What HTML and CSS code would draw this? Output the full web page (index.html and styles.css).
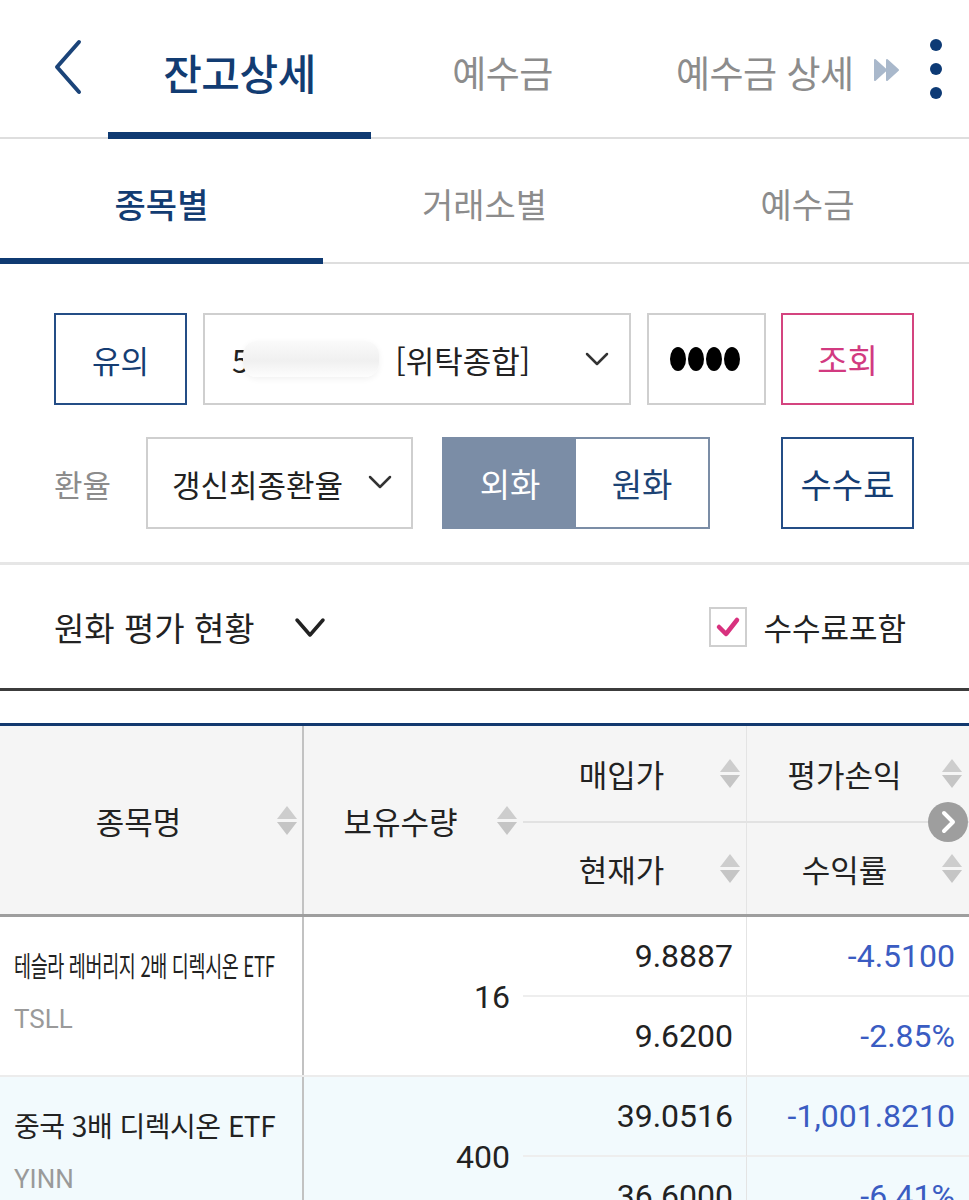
FILE: index.html
```html
<!DOCTYPE html>
<html lang="ko">
<head>
<meta charset="utf-8">
<title>잔고상세</title>
<link rel="stylesheet" href="styles.css">
</head>
<body>
<div class="app">
  <header class="topnav">
    <div class="back">
      <svg width="32" height="56" viewBox="0 0 32 56"><polyline points="27,3 5,28 27,53" fill="none" stroke="#1b4479" stroke-width="4" stroke-linecap="round" stroke-linejoin="round"/></svg>
    </div>
    <div class="ttab active">잔고상세</div>
    <div class="ttab">예수금</div>
    <div class="ttab ttab-last">예수금 상세</div>
    <span class="more">
      <svg width="26" height="24" viewBox="0 0 26 24"><path d="M1 2 L12 12 L1 22 Z" fill="#a9b8cb" stroke="#a9b8cb" stroke-width="2" stroke-linejoin="round"/><path d="M13 2 L24 12 L13 22 Z" fill="#a9b8cb" stroke="#a9b8cb" stroke-width="2" stroke-linejoin="round"/></svg>
    </span>
    <span class="kebab"><i></i><i></i><i></i></span>
  </header>

  <nav class="subtabs">
    <div class="stab active">종목별</div>
    <div class="stab">거래소별</div>
    <div class="stab">예수금</div>
  </nav>

  <section class="filters">
    <div class="frow">
      <div class="box btn-navy w133 b31">유의</div>
      <div class="box select acct">
        <span class="acct-num">5<span class="redact"></span></span>
        <span class="acct-type">[위탁종합]</span>
        <svg class="chev" width="24" height="14" viewBox="0 0 24 14"><polyline points="2,2 12,12 22,2" fill="none" stroke="#333" stroke-width="2.5" stroke-linecap="round" stroke-linejoin="round"/></svg>
      </div>
      <div class="box pw"><i></i><i></i><i></i><i></i></div>
      <div class="box btn-pink w133">조회</div>
    </div>
    <div class="frow">
      <div class="lbl">환율</div>
      <div class="box select rate">
        <span>갱신최종환율</span>
        <svg class="chev" width="24" height="14" viewBox="0 0 24 14"><polyline points="2,2 12,12 22,2" fill="none" stroke="#333" stroke-width="2.5" stroke-linecap="round" stroke-linejoin="round"/></svg>
      </div>
      <div class="toggle">
        <div class="tg on">외화</div>
        <div class="tg">원화</div>
      </div>
      <div class="box btn-navy w133 fee">수수료</div>
    </div>
  </section>

  <div class="summary">
    <div class="sum-title">
      <span>원화 평가 현황</span>
      <svg width="32" height="22" viewBox="0 0 32 22"><polyline points="3,3 16,18 29,3" fill="none" stroke="#222" stroke-width="3.5" stroke-linecap="round" stroke-linejoin="round"/></svg>
    </div>
    <label class="chk">
      <span class="chkbox"><svg width="26" height="22" viewBox="0 0 26 22"><polyline points="4,11 11,18 22,4" fill="none" stroke="#d8317e" stroke-width="4.5" stroke-linecap="round" stroke-linejoin="round"/></svg></span>
      <span>수수료포함</span>
    </label>
  </div>

  <div class="table">
    <div class="thead">
      <div class="th c1 span2"><span class="tl">종목명</span><span class="sort"><i class="up"></i><i class="dn"></i></span></div>
      <div class="th c2 span2"><span class="tl">보유수량</span><span class="sort"><i class="up"></i><i class="dn"></i></span></div>
      <div class="th c3 top"><span class="tl">매입가</span><span class="sort"><i class="up"></i><i class="dn"></i></span></div>
      <div class="th c4 top"><span class="tl">평가손익</span><span class="sort s4"><i class="up"></i><i class="dn"></i></span></div>
      <div class="th c3"><span class="tl">현재가</span><span class="sort"><i class="up"></i><i class="dn"></i></span></div>
      <div class="th c4"><span class="tl">수익률</span><span class="sort s4"><i class="up"></i><i class="dn"></i></span></div>
    </div>
    <span class="scroll-next">
      <svg width="40" height="40" viewBox="0 0 40 40"><circle cx="20" cy="20" r="20" fill="#9e9e9e"/><polyline points="16,11 25,20 16,29" fill="none" stroke="#fff" stroke-width="4" stroke-linecap="round" stroke-linejoin="round"/></svg>
    </span>

    <div class="trow">
      <div class="td c1 span2 name">
        <span class="nm squeeze">테슬라 레버리지 2배 디렉시온 ETF</span>
        <span class="tk">TSLL</span>
      </div>
      <div class="td c2 span2 num qty">16</div>
      <div class="td c3 top num">9.8887</div>
      <div class="td c4 top num blue">-4.5100</div>
      <div class="td c3 num">9.6200</div>
      <div class="td c4 num blue">-2.85%</div>
    </div>

    <div class="trow alt">
      <div class="td c1 span2 name">
        <span class="nm">중국 3배 디렉시온 ETF</span>
        <span class="tk">YINN</span>
      </div>
      <div class="td c2 span2 num qty">400</div>
      <div class="td c3 top num">39.0516</div>
      <div class="td c4 top num blue">-1,001.8210</div>
      <div class="td c3 num">36.6000</div>
      <div class="td c4 num blue">-6.41%</div>
    </div>
  </div>
</div>
</body>
</html>
```

FILE: styles.css
```css
* { box-sizing: border-box; }
html, body { margin: 0; padding: 0; background: #fff; }
body {
  font-family: "Noto Sans CJK KR", "Noto Sans", Roboto, sans-serif;
  color: #222;
  width: 969px;
  overflow: hidden;
}
.app { width: 969px; }

/* top nav */
.topnav {
  height: 139px;
  border-bottom: 2px solid #dedede;
  display: flex;
  align-items: center;
  padding-top: 6px;
}
.back {
  width: 108px;
  padding-left: 52px;
  display: flex;
  align-items: center;
  margin-top: -10px;
}
.ttab {
  width: 263px;
  text-align: center;
  font-size: 37px;
  color: #8c8c8c;
  line-height: 50px;
  position: relative;
  letter-spacing: -0.5px;
}
.ttab.active {
  font-size: 42px;
  font-weight: 500;
  color: #123c72;
}
.ttab.active::after {
  content: "";
  position: absolute;
  left: 0;
  right: 0;
  bottom: -42px;
  height: 7px;
  background: #0f3a72;
}
.ttab-last {
  width: 240px;
  text-align: left;
  padding-left: 42px;
  white-space: nowrap;
}
.more { width: 56px; display: flex; align-items: center; margin-top: -4px; }
.kebab {
  display: flex;
  flex-direction: column;
  gap: 12px;
  margin-top: -6px;
}
.kebab i {
  display: block;
  width: 12px;
  height: 12px;
  border-radius: 50%;
  background: #0d3a75;
}

/* sub tabs */
.subtabs {
  display: flex;
  height: 125px;
  border-bottom: 2px solid #dedede;
}
.stab {
  flex: 1;
  text-align: center;
  font-size: 34px;
  color: #8c8c8c;
  padding-top: 40px;
  line-height: 50px;
  position: relative;
}
.stab.active { color: #123c72; font-weight: 500; }
.stab.active::after {
  content: "";
  position: absolute;
  left: 0;
  right: 0;
  bottom: -2px;
  height: 6px;
  background: #0f3a72;
}

/* filters */
.filters {
  padding: 49px 55px 33px 54px;
  border-bottom: 3px solid #e6e6e6;
  display: flex;
  flex-direction: column;
  gap: 32px;
}
.frow {
  display: flex;
  height: 92px;
  align-items: stretch;
}
.box {
  border: 2px solid #cfcfcf;
  display: flex;
  align-items: center;
  justify-content: center;
  font-size: 33px;
  background: #fff;
}
.box.b31 { font-size: 31px; }
.w133 { width: 133px; }
.btn-navy { border-color: #244d86; color: #153d73; }
.btn-pink { border-color: #d4447f; color: #d23a80; }
.frow > .box + .box { margin-left: 16px; }
.frow > .btn-pink { margin-left: 15px !important; }
.select {
  justify-content: flex-start;
  position: relative;
  color: #222;
  font-size: 31px;
}
.acct { width: 428px; padding-left: 27px; }
.acct-num { position: relative; display: inline-flex; align-items: center; }
.redact {
  display: inline-block;
  width: 136px;
  height: 36px;
  margin: 0 6px 0 -6px;
  border-radius: 14px;
  background: linear-gradient(180deg, #fafafa 0%, #f0f0f0 55%, #fdfdfd 100%);
  box-shadow: 0 2px 6px rgba(0,0,0,0.06);
}
.acct-type { margin-left: 10px; }
.chev { position: absolute; right: 20px; top: 37px; }
.pw { width: 119px; gap: 2px; padding-right: 4px; }
.pw i {
  display: block;
  width: 16px;
  height: 24px;
  border-radius: 50%;
  background: #000;
}
.lbl {
  width: 92px;
  display: flex;
  align-items: center;
  font-size: 31px;
  color: #8c8c8c;
}
.rate { width: 267px; padding-left: 24px; }
.rate .chev { right: 19px; top: 36px; }
.toggle {
  width: 268px;
  margin-left: 29px;
  border: 2px solid #7b8da6;
  display: flex;
}
.tg {
  flex: 1;
  display: flex;
  align-items: center;
  justify-content: center;
  font-size: 33px;
  color: #1d4374;
}
.tg.on { background: #7b8da6; color: #fff; }
.frow > .fee { margin-left: 71px; font-size: 34px; }

/* summary */
.summary {
  height: 126px;
  display: flex;
  align-items: center;
  justify-content: space-between;
  padding: 0 63px 0 54px;
  border-bottom: 3px solid #3c3c3c;
  margin-bottom: 32px;
}
.sum-title {
  display: flex;
  align-items: center;
  gap: 39px;
  font-size: 33px;
  color: #222;
}
.sum-title svg { margin-top: 2px; }
.chk {
  display: flex;
  align-items: center;
  gap: 16px;
  font-size: 31px;
  color: #222;
}
.chkbox {
  width: 38px;
  height: 40px;
  border: 2px solid #cfcfcf;
  display: flex;
  align-items: center;
  justify-content: center;
}

/* table */
.table {
  position: relative;
  border-top: 3px solid #12386e;
}
.thead, .trow {
  display: grid;
  grid-template-columns: 304px 219px 224px 222px;
}
.thead {
  grid-template-rows: 97px 91px;
  background: #f5f5f5;
  border-bottom: 3px solid #9e9e9e;
}
.trow {
  grid-template-rows: 80px 78px;
  border-bottom: 2px solid #ececec;
}
.trow.alt { background: #f2fafd; }
.span2 { grid-row: span 2; }
.c1 { border-right: 2px solid #c2c2c2; }
.c3 { border-right: 1px solid #e4e4e4; }
.top { border-bottom: 2px solid #e2e2e2; }
.trow .top { border-bottom-color: #eeeeee; }

.th {
  display: flex;
  align-items: center;
  font-size: 31px;
  color: #222;
}
.th .tl { flex: 1; text-align: center; }
.sort {
  display: flex;
  flex-direction: column;
  gap: 3px;
  margin-right: 6px;
}
.sort.s4 { margin-right: 7px; }
.c1 .sort { margin-right: 5px; }
.sort i { display: block; width: 0; height: 0; border-left: 10px solid transparent; border-right: 10px solid transparent; }
.sort .up { border-bottom: 13px solid #cdcdcd; }
.sort .dn { border-top: 13px solid #c5c5c5; }

.scroll-next {
  position: absolute;
  left: 928px;
  top: 76px;
  width: 40px;
  height: 40px;
  display: block;
}
.scroll-next svg { display: block; }

.td { display: flex; align-items: center; }
.name {
  flex-direction: column;
  align-items: flex-start;
  padding: 29px 0 0 14px;
  overflow: hidden;
}
.nm {
  font-size: 28px;
  line-height: 38px;
  letter-spacing: -0.5px;
  color: #222;
  white-space: nowrap;
}
.nm.squeeze {
  display: inline-block;
  font-size: 28px;
  transform: scaleX(0.66);
  transform-origin: left center;
}
.tk {
  margin-top: 20px;
  font-family: Roboto, "Noto Sans", sans-serif;
  font-size: 26px;
  line-height: 30px;
  color: #9a9a9a;
}
.num {
  justify-content: flex-end;
  padding-right: 13px;
  font-family: Roboto, "Noto Sans", sans-serif;
  font-size: 32px;
  color: #222;
}
.c4.num { padding-right: 14px; }
.blue { color: #3a5cc2; }
.qty { padding-top: 2px; }
```
